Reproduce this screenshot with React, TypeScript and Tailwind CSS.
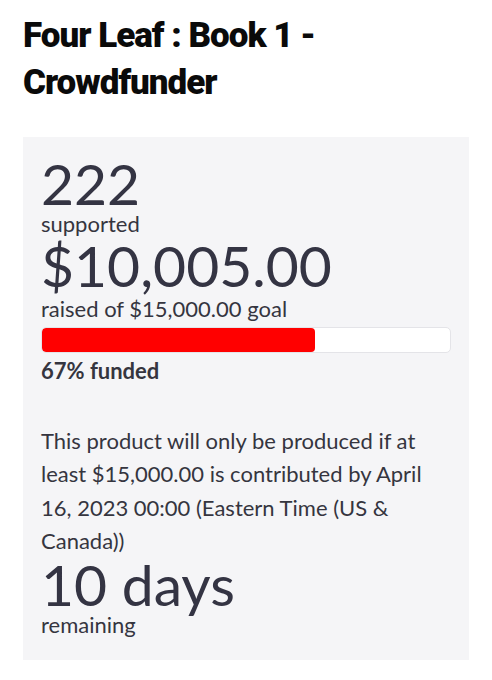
export default function App() {
  const pct = 67;
  return (
    <div className="min-h-[680px] w-full bg-white px-[23px] pt-[12px]" style={{ fontFamily: "Lato, 'Noto Sans', sans-serif" }}>
      <h1 className="text-[35px] font-black leading-[47px] text-[#0a0a0a] tracking-[-1px]" style={{ fontFamily: "Roboto, 'Liberation Sans', sans-serif" }}>
        Four Leaf : Book 1 -<br />Crowdfunder
      </h1>
      <div className="mt-[31px] bg-[#f5f5f7] px-[18px] pt-[18px] pb-[22px] text-[#35353f]">
        <div className="text-[57px] leading-[56px] text-[#343443]">222</div>
        <div className="text-[22px] leading-[26px]">supported</div>
        <div className="text-[57px] leading-[56px] text-[#343443]">$10,005.00</div>
        <div className="mt-[3px] text-[22px] leading-[26px]">raised of $15,000.00 goal</div>
        <div className="mt-[5px] h-[26px] w-full overflow-hidden rounded-[5px] border border-[#e4e4e8] bg-white">
          <div className="h-full rounded-[4px] bg-[#ff0000]" style={{ width: `${pct}%` }} />
        </div>
        <div className="mt-[5px] text-[22px] font-bold leading-[26px]">67% funded</div>
        <p className="mt-[40px] text-[22px] leading-[33.33px]">
          This product will only be produced if at least $15,000.00 is contributed by April 16, 2023 00:00 (Eastern Time (US &amp; Canada))
        </p>
        <div className="-mt-px text-[57px] leading-[56px] text-[#343443]">10 days</div>
        <div className="text-[22px] leading-[26px]">remaining</div>
      </div>
    </div>
  );
}
